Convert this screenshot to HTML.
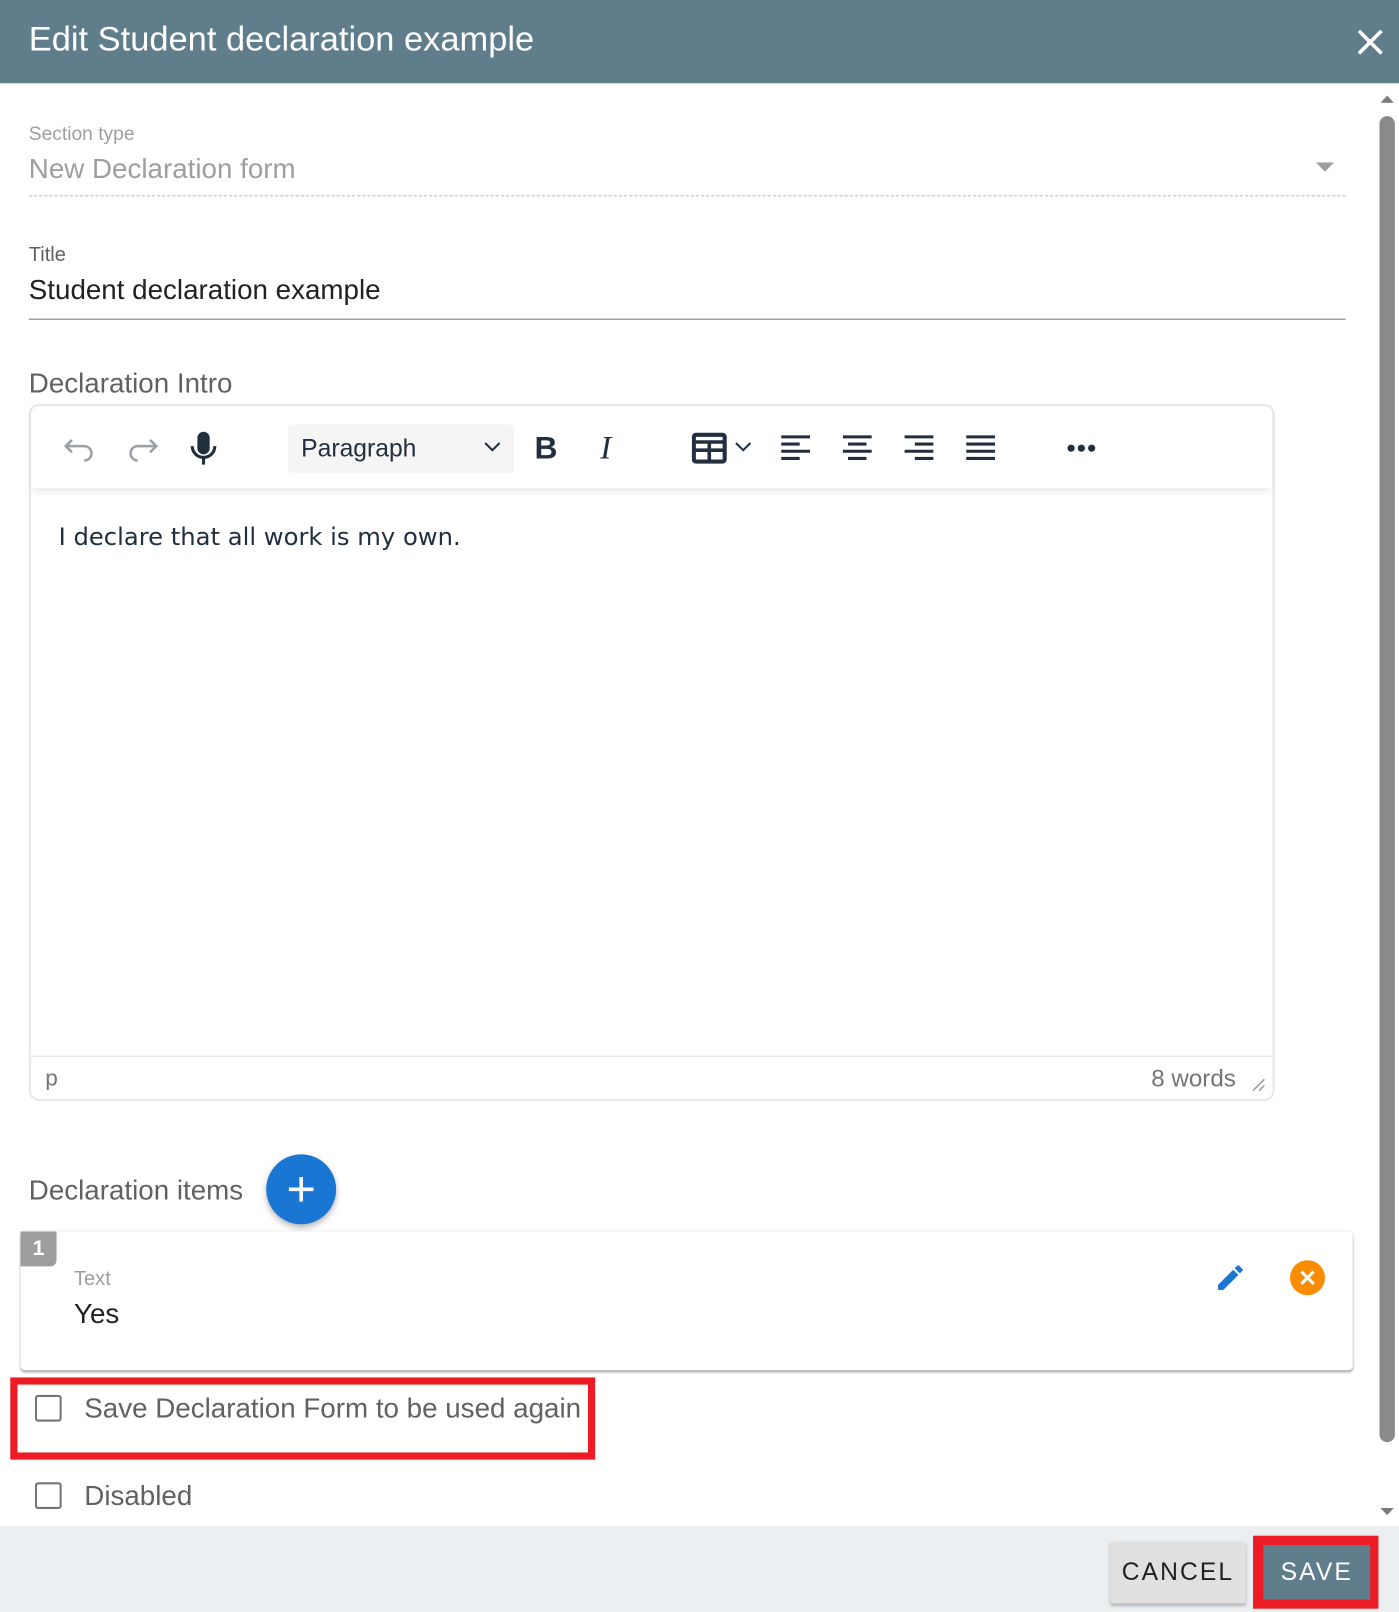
<!DOCTYPE html>
<html><head><meta charset="utf-8"><style>
html,body{margin:0;padding:0;width:1399px;height:1612px;overflow:hidden;background:#fff;font-family:"Liberation Sans",Arial,sans-serif}
#w{position:absolute;left:0;top:0;width:1361px;height:1568px;transform:scale(1.02792);transform-origin:0 0}
.a{position:absolute;white-space:nowrap}
.cb{position:absolute;width:26px;height:26px;border:2.5px solid #757575;border-radius:3px;box-sizing:border-box}
</style></head><body><div id="w">
<div class="a" style="left:0;top:0;width:1361px;height:81px;background:#607d8b"></div>
<div class="a" style="left:28px;top:20px;font-size:33.5px;color:#fff">Edit Student declaration example</div>
<svg class="a" style="left:1318px;top:26px" width="30" height="30" viewBox="0 0 30 30"><path d="M4 4L26 26M26 4L4 26" stroke="#fff" stroke-width="3.5"/></svg>
<div class="a" style="left:1342px;top:113px;width:15px;height:1290px;background:#8a8a8a;border-radius:8px"></div>
<svg class="a" style="left:1342px;top:91px" width="15" height="10"><path d="M1 9L7.5 2L14 9Z" fill="#7a7a7a"/></svg>
<svg class="a" style="left:1342px;top:1466px" width="15" height="10"><path d="M1 1L7.5 8L14 1Z" fill="#7a7a7a"/></svg>

<div class="a" style="left:28px;top:119px;font-size:18.7px;color:#9e9e9e">Section type</div>
<div class="a" style="left:28px;top:149px;font-size:27px;color:#9e9e9e">New Declaration form</div>
<svg class="a" style="left:1280px;top:158px" width="18" height="10"><path d="M0 0L9 9L18 0Z" fill="#9e9e9e"/></svg>
<div class="a" style="left:28px;top:190px;width:1281px;border-top:1.5px dashed #bdbdbd"></div>

<div class="a" style="left:28px;top:237px;font-size:19.5px;color:#616161">Title</div>
<div class="a" style="left:28px;top:267px;font-size:27px;color:#212121">Student declaration example</div>
<div class="a" style="left:28px;top:310px;width:1281px;border-top:1.5px solid #757575"></div>

<div class="a" style="left:28px;top:358px;font-size:27px;color:#616161">Declaration Intro</div>
<div class="a" style="left:28px;top:393px;width:1212px;height:678px;border:2px solid #e6e6e6;border-radius:10px;box-sizing:border-box"></div>
<div class="a" style="left:30px;top:395px;width:1208px;height:80px;box-shadow:0 4px 6px -2px rgba(0,0,0,.12)"></div>
<svg class="a" style="left:60px;top:418px" width="170" height="36" viewBox="0 0 170 36" fill="none">
<path d="M10 10L4 16L10 22M4 16H22A7 7 0 0 1 22 30" stroke="#9aa0a6" stroke-width="2.5"/>
<path d="M86 10L92 16L86 22M92 16H74A7 7 0 0 0 74 30" stroke="#9aa0a6" stroke-width="2.5"/>
<rect x="132" y="2" width="12" height="22" rx="6" fill="#222f3e"/>
<path d="M127 16A11 11 0 0 0 149 16M138 27V34" stroke="#222f3e" stroke-width="3"/>
</svg>
<div class="a" style="left:280px;top:413px;width:220px;height:47px;background:#f5f5f5;border-radius:4px"></div>
<div class="a" style="left:293px;top:423px;font-size:24px;color:#222f3e">Paragraph</div>
<svg class="a" style="left:470px;top:429px" width="18" height="12"><path d="M2 2L9 9L16 2" stroke="#222f3e" stroke-width="2" fill="none"/></svg>
<div class="a" style="left:520px;top:418px;font-size:31px;font-weight:bold;color:#222f3e">B</div>
<div class="a" style="left:584px;top:417px;font-size:32px;font-style:italic;font-family:'Liberation Serif',serif;color:#222f3e">I</div>
<svg class="a" style="left:673px;top:420px" width="62" height="32" viewBox="0 0 62 32">
<rect x="2" y="3" width="30" height="26" rx="2" fill="none" stroke="#222f3e" stroke-width="4"/>
<path d="M2 10H32M2 18H32M17 10V29" stroke="#222f3e" stroke-width="3.5"/>
<path d="M43 11L50 18L57 11" stroke="#222f3e" stroke-width="2" fill="none"/></svg>
<svg class="a" style="left:758px;top:421px" width="215" height="30" viewBox="0 0 215 30" stroke="#222f3e" stroke-width="3">
<path d="M2 4H30M2 11H20M2 18H30M2 25H20"/>
<path d="M62 4H90M67 11H85M62 18H90M67 25H85"/>
<path d="M122 4H150M132 11H150M122 18H150M132 25H150"/>
<path d="M182 4H210M182 11H210M182 18H210M182 25H210"/></svg>
<svg class="a" style="left:1037px;top:430px" width="32" height="12"><circle cx="5" cy="6" r="3.5" fill="#222f3e"/><circle cx="15" cy="6" r="3.5" fill="#222f3e"/><circle cx="25" cy="6" r="3.5" fill="#222f3e"/></svg>
<div class="a" style="left:57px;top:508px;color:#222f3e;font-family:'DejaVu Sans','Liberation Sans',sans-serif;font-size:23.6px">I declare that all work is my own.</div>
<div class="a" style="left:30px;top:1027px;width:1208px;border-top:1.5px solid #e0e0e0"></div>
<div class="a" style="left:44px;top:1036px;font-size:22px;color:#757575">p</div>
<div class="a" style="left:1120px;top:1036px;font-size:23.5px;color:#757575">8 words</div>
<svg class="a" style="left:1217px;top:1048px" width="14" height="14"><path d="M2 13L13 2M8 13L13 8" stroke="#999" stroke-width="1.5"/></svg>

<div class="a" style="left:28px;top:1143px;font-size:27px;color:#616161">Declaration items</div>
<div class="a" style="left:259px;top:1123px;width:68px;height:68px;border-radius:50%;background:#1976d2;box-shadow:0 3px 6px rgba(0,0,0,.3)"></div>
<svg class="a" style="left:279px;top:1143px" width="28" height="28"><path d="M14 2V26M2 14H26" stroke="#fff" stroke-width="3.5"/></svg>

<div class="a" style="left:20px;top:1198px;width:1296px;height:135px;background:#fff;border-radius:4px;box-shadow:0 2px 2px rgba(0,0,0,.3),0 0 3px rgba(0,0,0,.1)"></div>
<div class="a" style="left:20px;top:1198px;width:35px;height:34px;background:#9e9e9e;border-radius:0 0 6px 0;color:#fff;font-size:21px;font-weight:bold;text-align:center;line-height:34px">1</div>
<div class="a" style="left:72px;top:1233px;font-size:19.5px;color:#9e9e9e">Text</div>
<div class="a" style="left:72px;top:1263px;font-size:27px;color:#212121">Yes</div>
<svg class="a" style="left:1181px;top:1227px" width="32" height="32" viewBox="0 0 24 24"><path d="M3 17.25V21h3.75L17.81 9.94l-3.75-3.75L3 17.25zM20.71 7.04a1 1 0 0 0 0-1.41l-2.34-2.34a1 1 0 0 0-1.41 0l-1.83 1.83 3.75 3.75 1.83-1.83z" fill="#1976d2"/></svg>
<div class="a" style="left:1255px;top:1226px;width:34px;height:34px;border-radius:50%;background:#fb8c00"></div>
<svg class="a" style="left:1262px;top:1233px" width="20" height="20"><path d="M4 4L16 16M16 4L4 16" stroke="#fff" stroke-width="3"/></svg>

<div class="a" style="left:10px;top:1340px;width:569px;height:80px;border:7px solid #ed1c24;box-sizing:border-box"></div>
<div class="cb" style="left:34px;top:1357px"></div>
<div class="a" style="left:82px;top:1355px;font-size:27px;color:#616161">Save Declaration Form to be used again</div>
<div class="cb" style="left:34px;top:1442px"></div>
<div class="a" style="left:82px;top:1440px;font-size:27px;color:#616161">Disabled</div>

<div class="a" style="left:0;top:1485px;width:1361px;height:83px;background:#eceff1"></div>
<div class="a" style="left:1080px;top:1500px;width:132px;height:60px;background:#e0e0e0;border-radius:3px;box-shadow:0 2px 3px rgba(0,0,0,.25);color:#212121;font-size:24px;letter-spacing:2px;text-align:center;line-height:60px">CANCEL</div>
<div class="a" style="left:1219px;top:1494px;width:122px;height:71px;background:#ed1c24"></div>
<div class="a" style="left:1229px;top:1503px;width:104px;height:53px;background:#607d8b;color:#fff;font-size:24px;letter-spacing:2px;text-align:center;line-height:53px">SAVE</div>
</div></body></html>
